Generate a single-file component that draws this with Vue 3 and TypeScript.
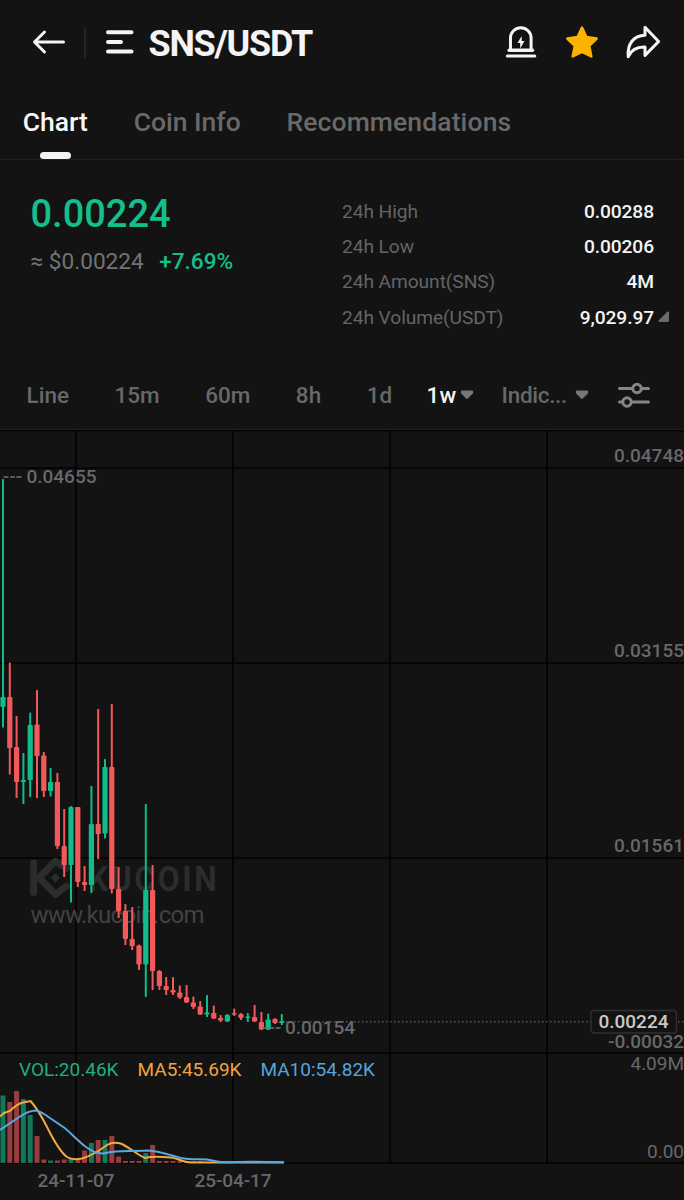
<script setup lang="ts">
type Candle = [number, number, number, number, boolean]

const stats = [
  { label: '24h High', value: '0.00288' },
  { label: '24h Low', value: '0.00206' },
  { label: '24h Amount(SNS)', value: '4M' },
  { label: '24h Volume(USDT)', value: '9,029.97' },
]

// wick top, body top, body bottom, wick bottom, rising
const candles: Candle[] = [
  [479, 697, 707, 727.5, true], [662.5, 697, 748, 774.5, false], [716, 747, 782, 798, false],
  [753, 780, 782, 804, true], [712.5, 725, 780, 797, true], [690, 724.5, 756, 798, false],
  [752, 755.5, 791, 797, false], [768, 782, 791, 796.5, true], [773, 782, 846, 849, false],
  [809, 846, 865, 877, false], [806, 807, 865, 902.5, true], [807, 807, 882, 887, false],
  [866, 882, 885, 891, false], [786, 824, 885, 893, true], [709, 824, 834, 859, false],
  [759, 767, 833.5, 838.5, true], [704, 767, 889, 893.5, false], [867, 889, 911, 918, false],
  [904, 911, 939, 945, false], [907, 939, 946, 950, false], [944.5, 945.5, 964.5, 970, false],
  [804, 890, 964.5, 997, true], [865, 890, 971, 990, false], [970, 971, 986, 990, false],
  [977, 986, 990, 995, false], [977, 990, 992.5, 995, false], [985.5, 992.5, 997.5, 999, false],
  [985, 997, 1002.5, 1003, false], [996.5, 1002.5, 1007, 1009, false], [1001, 1006.5, 1014.5, 1015, false],
  [995, 1012.5, 1014.5, 1017, true], [1005.5, 1013, 1018.5, 1019, false], [1015, 1018, 1020.5, 1022, false],
  [1014, 1015, 1021.5, 1022, true], [1008.5, 1013, 1014.5, 1016, false], [1013, 1014, 1018, 1020, false],
  [1013, 1016.5, 1018, 1022, true], [1005, 1017, 1021.5, 1022, false], [1012, 1022, 1029.5, 1030, false],
  [1013.5, 1019.5, 1029.5, 1030, true], [1018, 1019, 1023, 1024, false], [1014, 1021, 1023, 1025, true],
]

const volumeTops = [
  1095.5, 1102, 1091, 1099, 1115, 1136, 1159.5, 1160.5, 1160.5, 1159.5, 1159, 1159, 1150.5, 1143, 1140,
  1140, 1136, 1156.5, 1161, 1161, 1161, 1153, 1145, 1161, 1161, 1161, 1161, 1161, 1161, 1161, 1162, 1162,
  1162, 1162, 1162, 1162, 1162, 1162, 1162, 1162, 1162, 1162,
]

const bars = candles.map(([high, top, bottom, low, up], i) => ({
  x: 3 + i * 6.8, high, top, bottom, low, up, vol: volumeTops[i],
}))

const columns = [76, 233, 390, 547]
const rows = [430.5, 468, 663, 858, 1053, 1163]
const scale = [
  { y: 462, w: 70, text: '0.04748' },
  { y: 657, w: 70, text: '0.03155' },
  { y: 852, w: 70, text: '0.01561' },
  { y: 1047.5, w: 76, text: '-0.00032' },
]
</script>

<template>
  <main class="screen">
    <header class="bar">
      <svg class="back" width="34" height="26" viewBox="0 0 34 26">
        <path d="M31.5 13H3M12.5 3 2.5 13l10 10" />
      </svg>
      <i class="sep"></i>
      <svg class="menu" width="28" height="26" viewBox="0 0 28 26">
        <path d="M2 3.3h23.5M2 13h13M2 22.5h23.5" />
      </svg>
      <h1>SNS/USDT</h1>
      <svg class="alert" width="34" height="36" viewBox="0 0 34 36">
        <path d="M6.5 26.5V14a10.3 10.3 0 0 1 20.6 0v12.5" />
        <path class="base" d="M5.2 26.2h23.2" />
        <path d="M3.3 32h27.5" />
        <path class="bolt" d="m17.7 12-4.3 7h2.8v5.5l4.3-7.4h-2.8z" />
      </svg>
      <svg class="star" width="36" height="36" viewBox="0 0 36 36">
        <path d="m18 3.6 4.4 9.5 10.3 1.5-7.4 7.3 2 10.6-9.3-4.7-9.3 4.7 2-10.6-7.4-7.3 10.3-1.5z" />
      </svg>
      <svg class="share" width="36" height="36" viewBox="0 0 36 36">
        <path d="M20 3.2 33.6 17.5 20 31.4v-8.3C11.5 22.8 6 26.6 3.2 32.6 2.2 19.6 8.5 11.8 20 11.3z" />
      </svg>
    </header>

    <nav class="tabs">
      <span class="tab active">Chart</span>
      <span class="tab info">Coin Info</span>
      <span class="tab rec">Recommendations</span>
    </nav>

    <section class="summary">
      <div class="quote">
        <div class="price">0.00224</div>
        <div class="sub"><span>≈ $0.00224</span><b>+7.69%</b></div>
      </div>
      <dl class="stats">
        <div v-for="s in stats" :key="s.label" class="stat">
          <dt>{{ s.label }}</dt>
          <dd>{{ s.value }}</dd>
        </div>
        <svg class="corner" width="12" height="12" viewBox="0 0 12 12">
          <path d="M10 1.5V10H1.5z" />
        </svg>
      </dl>
    </section>

    <nav class="periods">
      <span>Line</span><span>15m</span><span>60m</span><span>8h</span><span>1d</span>
      <span class="on">1w<svg width="14" height="10" viewBox="0 0 14 10"><path d="M1.8 1.5h10.4v1.4L7 8 1.8 2.9z" /></svg></span>
      <span class="indic">Indic...<svg width="14" height="10" viewBox="0 0 14 10"><path d="M1.8 1.5h10.4v1.4L7 8 1.8 2.9z" /></svg></span>
      <svg class="settings" width="34" height="28" viewBox="0 0 34 28">
        <path d="M2.5 7.5H15m9.5 0h7M2.5 21h3m10 0h16" />
        <circle cx="20" cy="7.5" r="4.2" /><circle cx="10" cy="21" r="4.2" />
      </svg>
    </nav>

    <svg class="chart" width="684" height="771" viewBox="0 429 684 771">
      <path class="edge" d="M0 429.5h684" />
      <path v-for="y in rows" :key="'r' + y" class="grid" :d="`M0 ${y}H684`" />
      <path v-for="x in columns" :key="'c' + x" class="grid" :d="`M${x} 430V1163`" />

      <g class="mark">
        <path class="stem" d="M33.6 863v29.5" />
        <path class="arms" d="M66.5 868.5 55.5 861 39 877.8 55.5 894.6l11-8.5" />
        <path class="dot" d="m55.5 873.2 4.5 4.6-4.5 4.6-4.5-4.6z" />
        <text transform="translate(88 891) scale(.88 1)" textLength="146" class="brand">KUCOIN</text>
      </g>
      <text x="30.5" y="922.5" textLength="174" class="site">www.kucoin.com</text>

      <path class="current" d="M286 1021.7H684" />

      <g v-for="b in bars" :key="b.x" :class="b.up ? 'up' : 'down'">
        <rect :x="b.x - 1" :y="b.high" width="2" :height="b.low - b.high" rx=".6" />
        <rect :x="b.x - 2.6" :y="b.top" width="5.2" :height="b.bottom - b.top" rx=".8" />
        <rect class="vol" :x="b.x - 2.5" :y="b.vol" width="5" :height="1163 - b.vol" />
      </g>

      <path class="ma5" d="M0 1116.5 4 1113 10 1111C15 1106 18 1103.5 23 1102.5L30.5 1101C36 1107 41 1115 47 1127 53 1139 60 1152 67 1157 71 1159.5 77 1159.5 82 1158.5 91 1156 99 1151 107 1145 112 1142 116 1142 122 1144 130 1148 138 1155 145 1158 153 1155.5 164 1157 172 1157.5 179 1159 183 1162.3 191 1162.5H284" />
      <path class="ma10" d="M0 1130 20 1116.5C26 1112.5 30 1110.5 36 1110.5 40 1111 43 1113.5 47 1116L64 1127.5C70 1132 77 1140 86 1147 94 1153 102 1154.5 108 1152.5 116 1150 130 1151.5 148 1150.5 159 1151 170 1155 181 1158 190 1160 198 1159 207 1159.5 214 1160.5 216 1162 224 1162.2L252 1161.8 284 1162.3" />

      <path class="lead" d="M3.5 477h5M10 477h5M16.5 477h5M263 1028h5M269 1028h5M275.5 1028h5" />
      <text x="26.5" y="483" textLength="70" class="label">0.04655</text>
      <text x="285" y="1034" textLength="70" class="label">0.00154</text>
      <text v-for="s in scale" :key="s.text" x="684" :y="s.y" :textLength="s.w" class="label end">{{ s.text }}</text>
      <text x="684" y="1070" textLength="53.5" class="label end regular">4.09M</text>
      <text x="684" y="1157.5" textLength="37" class="label end regular">0.00</text>

      <rect class="tag" x="591" y="1010.5" width="85.5" height="22.5" rx="3" />
      <text x="598.5" y="1028" textLength="70" class="tag-text">0.00224</text>

      <text x="19" y="1076" textLength="99.5" class="legend green">VOL:20.46K</text>
      <text x="137.5" y="1076" textLength="104" class="legend orange">MA5:45.69K</text>
      <text x="260.5" y="1076" textLength="114.5" class="legend blue">MA10:54.82K</text>
      <text x="37.5" y="1187" textLength="77" class="label">24-11-07</text>
      <text x="194.5" y="1187" textLength="77" class="label">25-04-17</text>
    </svg>
  </main>
</template>

<style>
body { background: #131313; }
</style>

<style scoped>
* { box-sizing: border-box; }
.screen { width: 684px; height: 1200px; overflow: hidden; background: #131313; color: #f4f4f4; font-family: Roboto, sans-serif; display: flex; flex-direction: column; }
svg { display: block; flex: none; }
.bar { height: 84px; display: flex; align-items: center; padding: 0 24.5px 0 32px; }
.bar svg { fill: none; stroke: #f4f4f4; stroke-width: 3; stroke-linecap: round; stroke-linejoin: round; }
.sep { width: 2px; height: 31px; background: #242424; margin-left: 18px; }
.menu { margin-left: 20px; }
.bar .menu { stroke-width: 4; }
h1 { margin: 4px 0 0 14.5px; font-size: 36px; line-height: 42px; font-weight: 700; letter-spacing: -1.25px; width: 168px; white-space: nowrap; }
.alert { margin-left: auto; }
.bar .alert .base { stroke-width: 3.6; }
.bar .alert .bolt { fill: #f4f4f4; stroke: none; }
.star { margin-left: 26px; }
.bar .star { fill: #fbb300; stroke: #fbb300; stroke-width: 2.5; }
.share { margin-left: 25px; }
.bar .share { margin-right: -1px; }
.tabs { height: 76px; border-bottom: 1px solid #222; display: flex; padding: 19px 0 0 22.8px; font-size: 26.5px; font-weight: 500; color: #696969; line-height: 38px; gap: 45.7px; }
.tab { white-space: nowrap; letter-spacing: 0; }
.rec { letter-spacing: .12px; }
.active { color: #f8f8f8; display: flex; flex-direction: column; align-items: center; }
.active::after { content: ''; width: 31px; height: 8px; border-radius: 4px; background: #f4f4f4; margin-top: 11px; }
.summary { height: 201px; display: flex; }
.quote { width: 342px; padding: 30px 0 0 30.5px; }
.price { font-size: 38px; line-height: 48px; font-weight: 500; color: #13bf8b; }
.sub { margin-top: 10px; font-size: 22.6px; line-height: 28px; display: flex; gap: 15.5px; color: #737373; font-weight: 400; letter-spacing: 0; }
.sub b { font-weight: 500; color: #13bf8b; }
.stats { position: relative; margin: 0; width: 312px; padding-top: 33.5px; }
.stat { display: flex; justify-content: space-between; font-size: 19.2px; line-height: 35.4px; }
dt { color: #646464; letter-spacing: -.08px; }
dd { margin: 0; color: #f4f4f4; font-weight: 500; letter-spacing: -.1px; }
.corner { position: absolute; left: 316px; top: 151px; fill: #6b6b6b; stroke: #6b6b6b; stroke-width: 2; stroke-linejoin: round; }
.periods { height: 68px; display: flex; align-items: center; padding: 0 32px 0 26.5px; font-size: 22.5px; font-weight: 500; color: #686868; gap: 45.5px; }
.periods span { display: flex; align-items: center; white-space: nowrap; }
.periods span svg { margin-left: 4px; fill: #777; stroke: #777; stroke-width: 1.8; stroke-linejoin: round; }
.periods .on { color: #f4f4f4; margin-left: -11px; }
.periods .indic { margin-left: -18px; letter-spacing: -.3px; }
.periods .indic svg { margin-left: 7.5px; }
.settings { fill: none; stroke: #858585; stroke-width: 3; stroke-linecap: round; margin-left: -17px; }
.edge { stroke: #2b2b2b; stroke-width: 1; }
.grid { stroke: #030303; stroke-width: 1.6; }
.mark path { fill: none; stroke: #2b2c2d; stroke-width: 7; stroke-linecap: round; stroke-linejoin: round; }
.mark .dot { fill: #2b2c2d; stroke: none; }
.brand { font: 700 36px Roboto, sans-serif; fill: #2b2c2d; }
.site { font: 400 24px Roboto, sans-serif; fill: #424242; }
.current { stroke: #555; stroke-width: 1.5; stroke-dasharray: 1.5 2.5; }
.up { fill: #10bd8a; }
.down { fill: #f2595a; }
.vol { opacity: .6; }
.ma5, .ma10 { fill: none; stroke-width: 2; }
.ma5 { stroke: #f4a93c; }
.ma10 { stroke: #57a9e0; }
.lead { stroke: #707174; stroke-width: 1.5; fill: none; }
.label { font-size: 19px; font-weight: 500; fill: #67686b; }
.end { text-anchor: end; }
.regular { font-weight: 400; }
.tag { fill: #131313; stroke: #303030; stroke-width: 1.3; }
.tag-text { font-size: 19px; font-weight: 500; fill: #c9c9c9; }
.legend { font-size: 19px; }
.green { fill: #1fae80; }
.orange { fill: #f0a43c; }
.blue { fill: #53a6dc; }
</style>
